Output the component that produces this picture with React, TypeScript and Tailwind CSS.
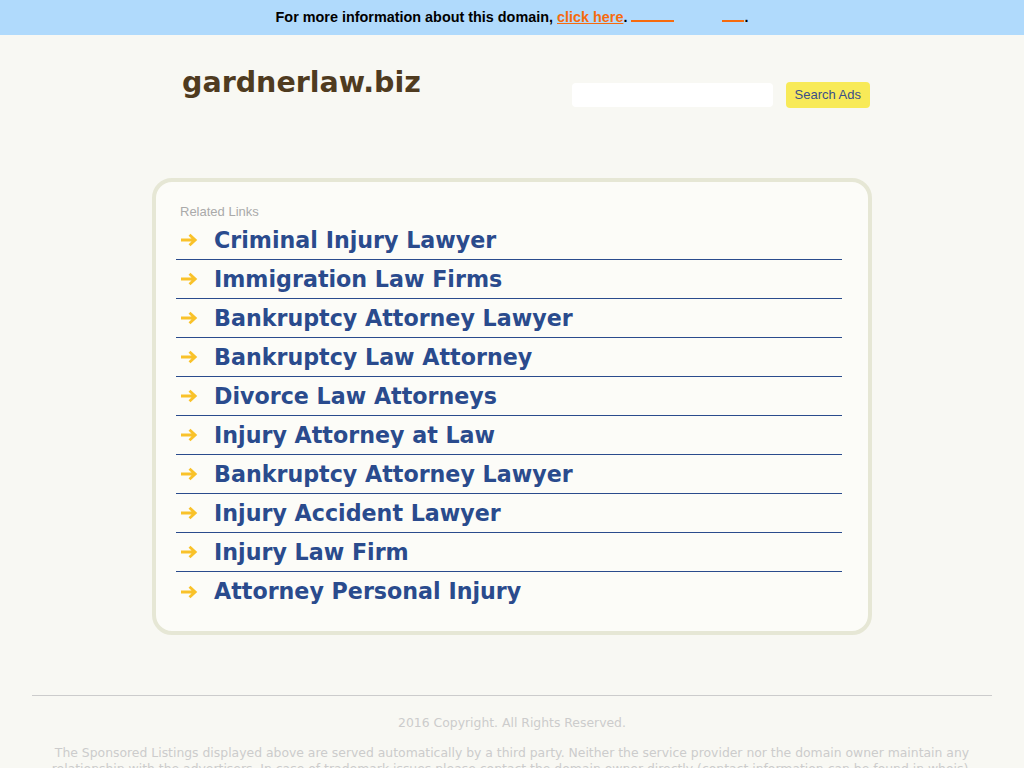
import React from 'react'

const links = [
  'Criminal Injury Lawyer',
  'Immigration Law Firms',
  'Bankruptcy Attorney Lawyer',
  'Bankruptcy Law Attorney',
  'Divorce Law Attorneys',
  'Injury Attorney at Law',
  'Bankruptcy Attorney Lawyer',
  'Injury Accident Lawyer',
  'Injury Law Firm',
  'Attorney Personal Injury',
]

function Arrow() {
  return (
    <svg width="18" height="14" viewBox="0 0 18 14" className="block">
      <path d="M1 7h14M9.5 1.8L15.2 7l-5.7 5.2" fill="none" stroke="#f9c22a" strokeWidth="2.8" strokeLinecap="butt" />
    </svg>
  )
}

export default function App() {
  return (
    <div className="min-h-screen bg-[#f8f8f3] font-['DejaVu_Sans',sans-serif]">
      {/* top notice bar */}
      <div className="h-[35px] bg-[#b0dafc] flex items-center justify-center font-['Liberation_Sans',Arial,sans-serif] text-[14.4px] font-bold text-black">
        <span>
          For more information about this domain,{' '}
          <a href="#" className="text-[#f66b0e] underline">click here</a>.{' '}
          <span className="inline-block w-[43px] h-[15px] border-b-2 border-[#f66b0e] align-baseline" />
          <span className="inline-block w-[48px]" />
          <span className="inline-block w-[22px] h-[15px] border-b-2 border-[#f66b0e] align-baseline" />.
        </span>
      </div>

      <div className="w-[720px] mx-auto">
        {/* header */}
        <div className="flex items-start justify-between h-[143px]">
          <h1 className="mt-[31px] ml-[30px] text-[28.5px] font-bold leading-[34px] text-[#4f3b1f]">
            gardnerlaw.biz
          </h1>
          <div className="flex items-center gap-[13px] mt-[47px] mr-[2px]">
            <input
              type="text"
              className="w-[201px] h-[24px] rounded-[4px] bg-white outline-none border-0"
            />
            <button className="h-[26px] px-[9px] rounded-[4px] bg-[#f8ea58] text-[#3a4e8a] font-['Liberation_Sans',Arial,sans-serif] text-[13px]">
              Search Ads
            </button>
          </div>
        </div>

        {/* related links box */}
        <div className="border-4 border-[#e6e7d5] rounded-[20px] bg-[#fcfcf8] pt-[22px] pb-[20px] pl-[20px] pr-[26px]">
          <div className="pl-[4px] font-['Liberation_Sans',Arial,sans-serif] text-[13px] leading-[16px] text-[#aaaaaa] mb-[1px]">
            Related Links
          </div>
          <ul>
            {links.map((l, i) => (
              <li
                key={i}
                className={`h-[39px] flex items-center ${i < links.length - 1 ? 'border-b border-[#2a4b8d]' : ''}`}
              >
                <span className="w-[38px] pl-[4px]">
                  <Arrow />
                </span>
                <a href="#" className="text-[22.2px] font-bold text-[#2a4b8d] leading-none">
                  {l}
                </a>
              </li>
            ))}
          </ul>
        </div>
      </div>

      {/* footer */}
      <div className="mx-[32px] mt-[60px] border-t border-[#cccccc] pt-[19px] text-center text-[12.4px] text-[#cccccc]">
        <p className="leading-[16px]">2016 Copyright. All Rights Reserved.</p>
        <p className="mt-[14px] px-[12px] leading-[16px]">
          The Sponsored Listings displayed above are served automatically by a third party. Neither the service provider nor the domain owner maintain any relationship with the advertisers. In case of trademark issues please contact the domain owner directly (contact information can be found in whois).
        </p>
      </div>
    </div>
  )
}
